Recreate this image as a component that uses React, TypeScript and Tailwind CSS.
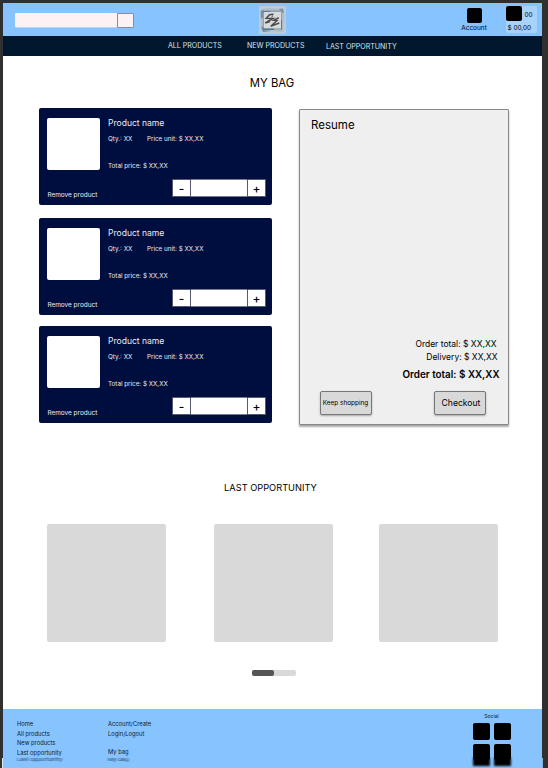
import React from "react";

const navItems = [
  { label: "ALL PRODUCTS", cls: "ml-[165px] w-[79px]" },
  { label: "NEW PRODUCTS", cls: "w-[79px]" },
  { label: "LAST OPPORTUNITY", cls: "pt-px" },
];

function Logo() {
  return (
    <svg width="27" height="28" viewBox="0 0 27 28" className="ml-[125px] mt-[3px] shrink-0">
      <rect width="27" height="28" rx="1.5" fill="#bccbd7" />
      <path d="M2 4L8 2L24 3L25 10L24 26L12 25L3 26L2 17Z" fill="#adbcc8" />
      <path d="M1.5 5L5 3.5L4.5 11L2 13ZM20 3L24 2.5L25 7L22 6ZM2 21L4.5 20L6 24L12 25L4 26Z" fill="#7a91a5" />
      <path d="M4 4.5H23V23.5H4Z" fill="#8ba2b1" />
      <path d="M4 5H11V6.5H4ZM4 22H15V24H4ZM22 14H23V23.5H22Z" fill="#577c98" />
      <rect x="5" y="6" width="17" height="16.3" fill="#d9dada" />
      <path d="M14.5 8.2L10.5 8.8L7.3 12.2L14 12.4L6.3 17L11 15.6" fill="none" stroke="#4b4c4f" strokeWidth="1.6" />
      <path d="M19.8 11.8L14.8 14.2L18 14.6L11.8 20.2L15 19L20.3 17" fill="none" stroke="#4b4c4f" strokeWidth="1.5" />
      <path d="M13.5 9.5L12.8 11.5" fill="none" stroke="#4b4c4f" strokeWidth="1" />
    </svg>
  );
}

function Header() {
  return (
    <header className="flex h-[33px] bg-[#87c4ff]">
      <div className="ml-3 mt-[10px] flex h-[15px] w-[119px] shrink-0 pb-px">
        <div className="h-full w-[102px] rounded-[1px] bg-[#fdf2f3] shadow-[0_1px_0_#b9d3f2]" />
        <div className="h-[15px] w-[17px] shrink-0 rounded-[1px] border border-[#8d8a99] bg-[#fdf2f3]" />
      </div>
      <Logo />
      <div className="ml-[172px] flex w-[32px] shrink-0 flex-col items-center pt-[5px]">
        <div className="ml-px h-[15px] w-[15.5px] rounded-[2px] bg-black" />
        <span className="mt-px text-[6.5px] leading-[8px]">Account</span>
      </div>
      <div className="ml-[16px] mt-[3px] h-[27px] w-[31px] shrink-0 rounded-[2px] bg-[#a7d2fa] text-[6.4px]">
        <div className="flex h-[15px] items-center gap-[3px]">
          <div className="h-[15px] w-[15.5px] rounded-[2px] bg-black" />
          <span className="pt-[2px] leading-[8px]">00</span>
        </div>
        <div className="pl-[1.5px] pt-[3px] leading-[9px]">$ 00,00</div>
      </div>
    </header>
  );
}

function Product({ cls }: { cls: string }) {
  return (
    <article className={"flex h-[97px] w-[233px] rounded-[2px] bg-[#000d3f] text-[6.3px] leading-[8px] text-[#e9ebf2] " + cls}>
      <div className="ml-[8.4px] w-[60.6px] shrink-0 pt-[9.5px]">
        <div className="h-[52.5px] w-[52.5px] rounded-[2px] bg-white" />
        <div className="mt-[20.5px] text-[6.45px]">Remove product</div>
      </div>
      <div className="flex-1 pt-[9px]">
        <h2 className="text-[8.55px] leading-[12px]">Product name</h2>
        <div className="mt-[6px] flex">
          <span className="w-[39px]">Qty.: XX</span>
          <span>Price unit: $ XX,XX</span>
        </div>
        <div className="mt-[19px]">Total price: $ XX,XX</div>
        <div className="ml-[64px] mt-[9px] flex h-[18px] w-[94px] text-[12px] font-medium leading-[17px] text-black">
          <button className="w-[19px] rounded-[1px] border border-[#555a70] bg-white leading-[17px]">-</button>
          <div className="w-[56px] border-y border-[#777b91] bg-white" />
          <button className="w-[19px] rounded-[1px] border border-[#555a70] bg-white leading-[17px]">+</button>
        </div>
      </div>
    </article>
  );
}

function Resume() {
  return (
    <aside className="ml-[27px] mt-px flex h-[316px] w-[210px] flex-col rounded-[1px] border border-[#888] bg-[#efefef] shadow-[0_2px_2px_rgba(0,0,0,0.35)]">
      <h2 className="ml-[11px] mt-[7px] text-[11.5px] leading-[16px]">Resume</h2>
      <div className="mt-[205px] pr-[11.5px] text-right text-[8.5px] leading-[13px]">Order total: $ XX,XX</div>
      <div className="pr-[10.5px] text-right text-[8.5px] leading-[13px]">Delivery: $ XX,XX</div>
      <div className="mt-[3px] pr-[8.5px] text-right text-[9.9px] font-semibold leading-[14px]">Order total: $ XX,XX</div>
      <div className="ml-[19.5px] mt-[10px] flex gap-[62px]">
        <button className="h-[24px] w-[52px] rounded-[2px] border border-[#777] bg-[#d9d9d9] pt-px text-[6.45px] shadow-[0_1px_2px_rgba(0,0,0,0.3)]">Keep shopping</button>
        <button className="h-[24px] w-[52px] rounded-[2px] border border-[#777] bg-[#d9d9d9] pl-[3px] text-[8.6px] shadow-[0_1px_2px_rgba(0,0,0,0.3)]">Checkout</button>
      </div>
    </aside>
  );
}

function FooterContent() {
  return (
    <div className="flex h-[59px] text-[5.8px] leading-[9.6px] text-[#0c1c2d]">
      <div className="ml-[14px] w-[91px] pt-[10px]">
        <div>Home</div>
        <div>All products</div>
        <div>New products</div>
        <div>Last opportunity</div>
      </div>
      <div className="w-[364px] pt-[10px]">
        <div>Account/Create</div>
        <div>Login/Logout</div>
        <div className="mt-[8.5px]">My bag</div>
      </div>
      <div className="w-[39px] pt-[3px]">
        <div className="text-center text-[5.1px] leading-[8px]">Social</div>
        <div className="ml-px mt-[3px] grid w-[38px] grid-cols-2 gap-x-[4px] gap-y-[4px]">
          <div className="h-[16.5px] rounded-[2px] bg-black" />
          <div className="h-[16.5px] rounded-[2px] bg-black" />
          <div className="h-[16.5px] rounded-[2px] bg-black" />
          <div className="h-[16.5px] rounded-[2px] bg-black" />
        </div>
      </div>
    </div>
  );
}

export default function App() {
  return (
    <div className="h-[768px] w-[548px] overflow-hidden whitespace-nowrap bg-[#303030] pl-[3px] pt-[3px] font-['Inter','Liberation_Sans',sans-serif] text-black">
      <main className="h-[765px] w-[539px] bg-white">
        <Header />
        <nav className="flex h-[20px] bg-[#00172d] text-[7.05px] leading-[19px] text-[#dce3e9]">
          {navItems.map((item) => (
            <span key={item.label} className={item.cls}>{item.label}</span>
          ))}
        </nav>
        <h1 className="-ml-px pt-[19px] text-center text-[11.3px] leading-[16px]">MY BAG</h1>
        <section className="mt-[17px] flex h-[371px] pl-[36px]">
          <div>
            <Product cls="" />
            <Product cls="mt-[13px]" />
            <Product cls="mt-[11px]" />
          </div>
          <Resume />
        </section>
        <h2 className="-ml-1 mt-[2px] text-center text-[9.25px] leading-[14px]">LAST OPPORTUNITY</h2>
        <section className="mt-[29px] flex pl-[44.4px]">
          <div className="h-[118px] w-[118.3px] rounded-[2px] bg-[#d9d9d9]" />
          <div className="ml-[48.7px] h-[118px] w-[118.3px] rounded-[2px] bg-[#d9d9d9]" />
          <div className="ml-[46.7px] h-[118px] w-[118.3px] rounded-[2px] bg-[#d9d9d9]" />
        </section>
        <div className="ml-[249px] mt-[28px] h-[6px] w-[43.5px] rounded-[2px] bg-[#d9d9d9]">
          <div className="h-full w-[22px] rounded-[2px] bg-[#555]" />
        </div>
        <footer className="relative mt-[33px] h-[59px] bg-[#87c4ff]">
          <FooterContent />
          <div className="absolute left-[14px] top-[48px] flex origin-top scale-y-[0.7] text-[5.85px] leading-[8px] text-[#10243a]/90 blur-[1px]" aria-hidden="true">
            <span className="w-[91px]">Last opportunity</span>
            <span>My bag</span>
          </div>
          <div className="absolute left-[470px] top-[49px] flex gap-[4px] blur-[1px]" aria-hidden="true">
            <div className="h-[8px] w-[17px] bg-black" />
            <div className="h-[8px] w-[17px] bg-black" />
          </div>
          <div className="absolute -left-px bottom-0 h-[10px] w-px bg-[#dce6ee]" />
          <div className="absolute -right-px bottom-0 h-[10px] w-px bg-[#87b4df]" />
        </footer>
      </main>
    </div>
  );
}
